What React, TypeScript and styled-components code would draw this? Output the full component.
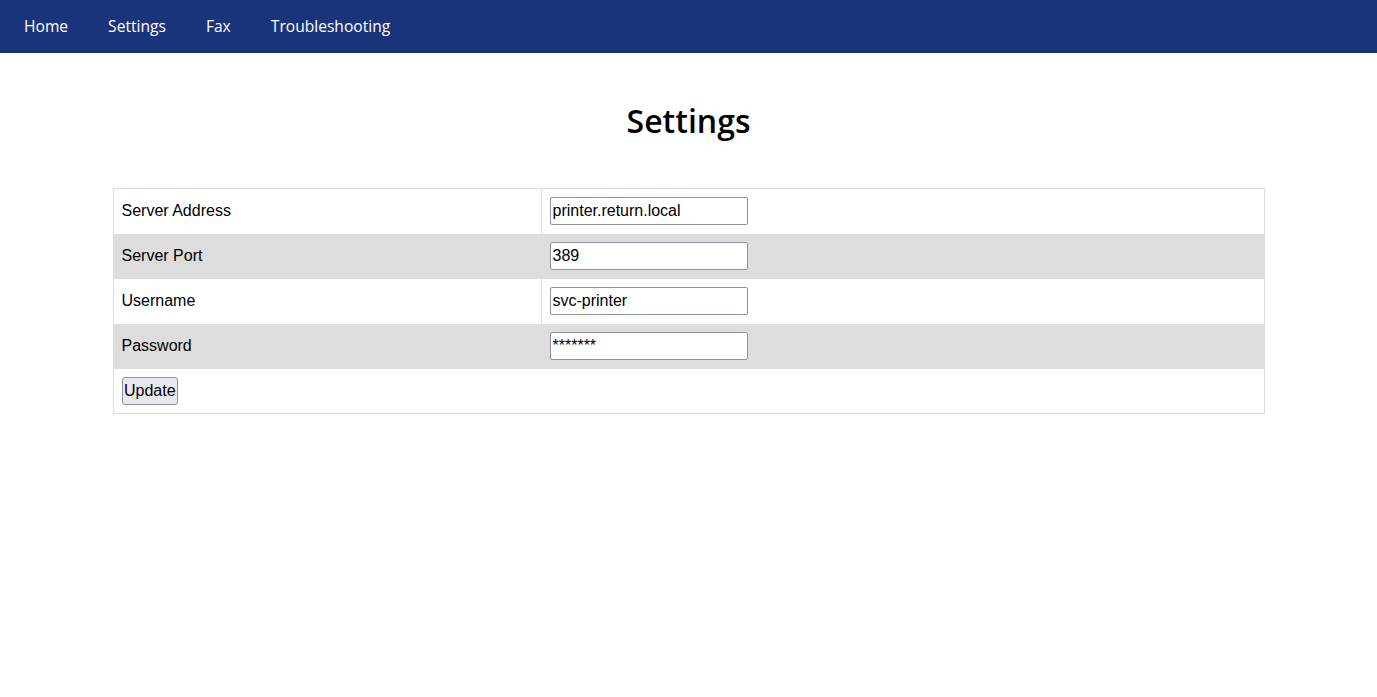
import React from "react";
import styled, { createGlobalStyle } from "styled-components";

const Global = createGlobalStyle`
  html, body { margin: 0; padding: 0; background: #fff; }
  body { font-family: "Liberation Sans", Arial, sans-serif; color: #000; }
`;

const NavBar = styled.nav`
  display: flex;
  align-items: center;
  height: 53px;
  background: #1a347b;
  padding: 0 4px;
`;

const NavLink = styled.a`
  font-family: "Open Sans", sans-serif;
  font-size: 15.6px;
  color: #fff;
  text-decoration: none;
  padding: 0 20px;
  line-height: 53px;
`;

const Title = styled.h1`
  font-family: "Open Sans", sans-serif;
  font-weight: 600;
  font-size: 32px;
  text-align: center;
  margin: 48px 0 47px;
  line-height: 40px;
`;

const Table = styled.table`
  width: 1152px;
  margin: 0 auto;
  border-collapse: collapse;
  table-layout: fixed;
  border: 1px solid #dddddd;
  font-size: 16px;
`;

const Row = styled.tr<{ $shaded?: boolean }>`
  height: 45px;
  background: ${(p) => (p.$shaded ? "#dddddd" : "#ffffff")};
`;

const LabelCell = styled.td`
  width: 411px;
  padding: 0 8px;
  vertical-align: middle;
  border-right: 1px solid #dddddd;
`;

const ValueCell = styled.td`
  padding: 0 8px;
  vertical-align: middle;
`;

const Field = styled.input`
  box-sizing: border-box;
  width: 198px;
  height: 28px;
  padding: 0 2px;
  border: 1px solid #8f8f9d;
  border-radius: 2px;
  font-family: "Liberation Sans", Arial, sans-serif;
  font-size: 16px;
  color: #000;
  background: #fff;
  display: block;
`;

const Button = styled.button`
  box-sizing: border-box;
  height: 28px;
  padding: 0 1.5px;
  border: 1px solid #8f8f9d;
  border-radius: 3px;
  background: #e9e9ed;
  font-family: "Liberation Sans", Arial, sans-serif;
  font-size: 16px;
  color: #000;
  display: block;
`;

const rows = [
  { label: "Server Address", value: "printer.return.local" },
  { label: "Server Port", value: "389" },
  { label: "Username", value: "svc-printer" },
  { label: "Password", value: "*******" },
];

export default function App() {
  return (
    <>
      <Global />
      <NavBar>
        <NavLink href="#">Home</NavLink>
        <NavLink href="#">Settings</NavLink>
        <NavLink href="#">Fax</NavLink>
        <NavLink href="#">Troubleshooting</NavLink>
      </NavBar>
      <Title>Settings</Title>
      <Table>
        <tbody>
          {rows.map((r, i) => (
            <Row key={r.label} $shaded={i % 2 === 1}>
              <LabelCell>{r.label}</LabelCell>
              <ValueCell>
                <Field type="text" defaultValue={r.value} />
              </ValueCell>
            </Row>
          ))}
          <Row>
            <ValueCell colSpan={2}>
              <Button type="button">Update</Button>
            </ValueCell>
          </Row>
        </tbody>
      </Table>
    </>
  );
}
